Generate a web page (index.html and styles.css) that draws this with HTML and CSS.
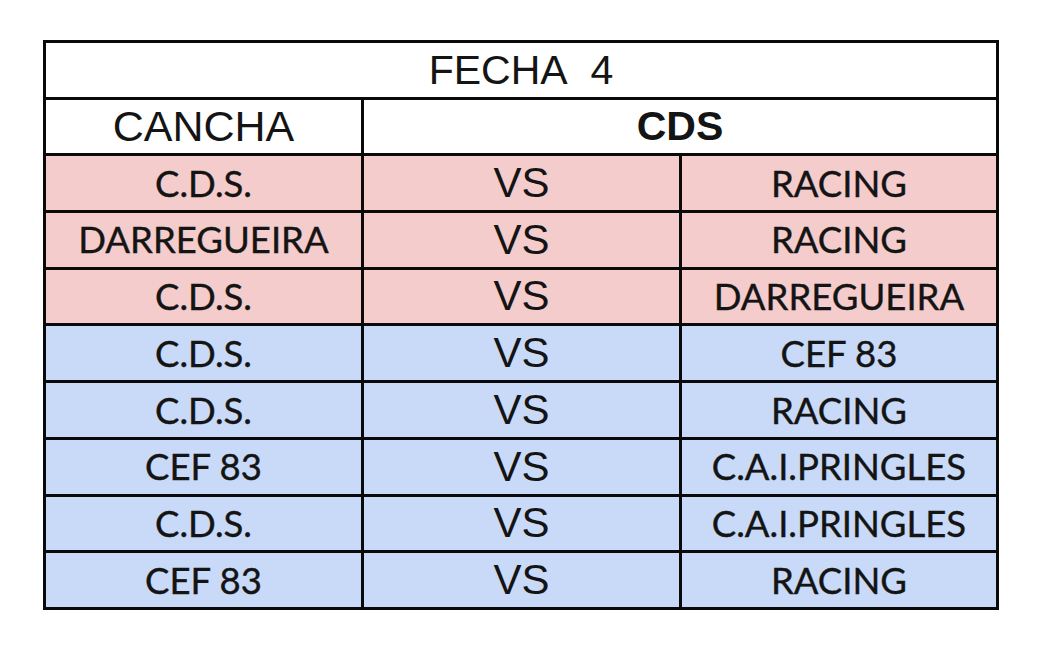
FILE: index.html
```html
<!DOCTYPE html>
<html lang="es">
<head>
<meta charset="utf-8">
<title>Fecha 4</title>
<link rel="stylesheet" href="styles.css">
</head>
<body>
<div class="page">
  <table class="fixture">
    <colgroup><col class="c1"><col class="c2"><col class="c3"></colgroup>
    <tr class="title"><td colspan="3">FECHA&nbsp; 4</td></tr>
    <tr class="head"><td class="cancha">CANCHA</td><td colspan="2" class="cds">CDS</td></tr>
    <tr class="pink"><td>C.D.S.</td><td class="vs">VS</td><td>RACING</td></tr>
    <tr class="pink"><td>DARREGUEIRA</td><td class="vs">VS</td><td>RACING</td></tr>
    <tr class="pink"><td>C.D.S.</td><td class="vs">VS</td><td>DARREGUEIRA</td></tr>
    <tr class="blue"><td>C.D.S.</td><td class="vs">VS</td><td>CEF 83</td></tr>
    <tr class="blue"><td>C.D.S.</td><td class="vs">VS</td><td>RACING</td></tr>
    <tr class="blue"><td>CEF 83</td><td class="vs">VS</td><td>C.A.I.PRINGLES</td></tr>
    <tr class="blue"><td>C.D.S.</td><td class="vs">VS</td><td>C.A.I.PRINGLES</td></tr>
    <tr class="blue"><td>CEF 83</td><td class="vs">VS</td><td>RACING</td></tr>
  </table>
</div>
</body>
</html>
```
FILE: styles.css
```css
html, body {
  margin: 0;
  padding: 0;
  background: #ffffff;
}
.page {
  padding: 40px 0 0 43px;
}
.fixture {
  border-collapse: collapse;
  table-layout: fixed;
  width: 956px;
  border: 3px solid #0a0a0a;
  color: #141414;
  font-family: "Lato", "Liberation Sans", sans-serif;
}
.fixture col.c1, .fixture col.c2 { width: 318px; }
.fixture td {
  border: 3px solid #0a0a0a;
  text-align: center;
  vertical-align: middle;
  padding: 0;
  height: 53.75px;
  font-size: 36.5px;
  line-height: 1;
  white-space: nowrap;
  -webkit-text-stroke: 0.4px #141414;
}
.fixture .title td {
  height: 54px;
  padding: 0;
  background: #fff;
  font-family: "Liberation Sans", Arial, sans-serif;
  font-size: 41px;
  -webkit-text-stroke: 0;
}
.fixture .head td {
  height: 53px;
  padding: 0;
  background: #fff;
}
.fixture .cancha {
  font-family: "Liberation Sans", Arial, sans-serif;
  font-size: 43px;
  -webkit-text-stroke: 0;
}
.fixture .cds {
  font-family: "Liberation Sans", Arial, sans-serif;
  font-weight: bold;
  font-size: 41px;
  -webkit-text-stroke: 0;
}
.fixture .vs {
  font-family: "Liberation Sans", Arial, sans-serif;
  font-size: 42px;
  padding: 0;
  -webkit-text-stroke: 0;
}
.fixture .pink td { background: #f4cccc; }
.fixture .blue td { background: #c9daf8; }
```
